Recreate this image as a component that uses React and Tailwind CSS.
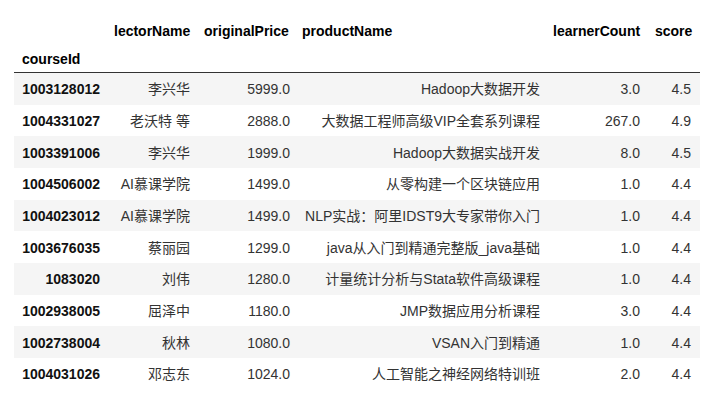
import React from 'react';

const rows = [
  ['1003128012', '李兴华', '5999.0', 'Hadoop大数据开发', '3.0', '4.5'],
  ['1004331027', '老沃特 等', '2888.0', '大数据工程师高级VIP全套系列课程', '267.0', '4.9'],
  ['1003391006', '李兴华', '1999.0', 'Hadoop大数据实战开发', '8.0', '4.5'],
  ['1004506002', 'AI慕课学院', '1499.0', '从零构建一个区块链应用', '1.0', '4.4'],
  ['1004023012', 'AI慕课学院', '1499.0', 'NLP实战：阿里IDST9大专家带你入门', '1.0', '4.4'],
  ['1003676035', '蔡丽园', '1299.0', 'java从入门到精通完整版_java基础', '1.0', '4.4'],
  ['1083020', '刘伟', '1280.0', '计量统计分析与Stata软件高级课程', '1.0', '4.4'],
  ['1002938005', '屈泽中', '1180.0', 'JMP数据应用分析课程', '3.0', '4.4'],
  ['1002738004', '秋林', '1080.0', 'VSAN入门到精通', '1.0', '4.4'],
  ['1004031026', '邓志东', '1024.0', '人工智能之神经网络特训班', '2.0', '4.4'],
];

const cols = 'grid grid-cols-[93px_90px_99px_251px_100px_53px]';

export default function App() {
  return (
    <div
      className="w-[720px] h-[399px] bg-white overflow-hidden pl-[14px] pt-[16px] text-[14px]"
      style={{ fontFamily: '"Liberation Sans", Arial, "Noto Sans CJK SC", sans-serif' }}
    >
      <div className="w-[686px]">
        {/* column headers */}
        <div className={`${cols} h-[31px] items-center font-bold text-black`}>
          <div />
          <div className="pl-[7px]">lectorName</div>
          <div className="pl-[7px]">originalPrice</div>
          <div className="pl-[6px]">productName</div>
          <div className="pl-[6px]">learnerCount</div>
          <div className="pl-[8px]">score</div>
        </div>
        <div className={`${cols} h-[26px] items-center font-bold text-black border-b border-[#333]`}>
          <div className="pl-[8px]">courseId</div>
        </div>

        {/* body */}
        {rows.map((r, i) => (
          <div
            key={r[0]}
            className={`${cols} h-[31.67px] pt-[2px] items-center text-right text-[#333] ${i % 2 === 0 ? 'bg-[#f5f5f5]' : 'bg-white'}`}
          >
            <div className="pr-[7px] font-bold text-[#111]">{r[0]}</div>
            <div className="pr-[7px]">{r[1]}</div>
            <div className="pr-[6px]">{r[2]}</div>
            <div className="pr-[7px] whitespace-nowrap">{r[3]}</div>
            <div className="pr-[7px]">{r[4]}</div>
            <div className="pr-[9px]">{r[5]}</div>
          </div>
        ))}
      </div>
    </div>
  );
}
